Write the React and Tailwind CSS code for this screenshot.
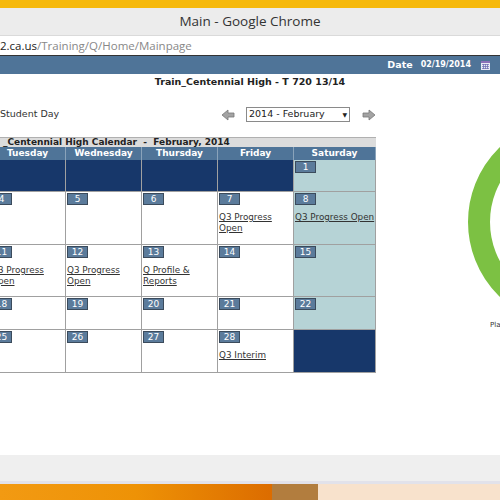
import React from 'react';

const navy = 'bg-[#17376a]';
const sat = 'bg-[#b6d3d6]';

const Badge = ({ n }) => (
  <span className="flex items-center justify-center w-[21px] h-[12px] bg-[#5b7b9b] border border-[#3b4b5c] text-white text-[9px] leading-none">
    {n}
  </span>
);

const Cell = ({ n, events = [], kind = 'day' }) => {
  const bg = kind === 'navy' ? navy : kind === 'sat' ? sat : 'bg-white';
  return (
    <div className={`${bg} border-r border-b border-[#a0a0a0] pl-[1px] pt-[1px] overflow-hidden leading-none`}>
      {n && <Badge n={n} />}
      {events.length > 0 && (
        <div className="mt-[7px] flex flex-col">
          {events.map((e, i) => (
            <span key={i} className="text-[8.8px] leading-[11px] text-[#333] underline">
              {e}
            </span>
          ))}
        </div>
      )}
    </div>
  );
};

const Arrow = ({ dir }) => (
  <svg width="14" height="12" viewBox="0 0 14 12">
    <polygon
      points={dir === 'left' ? '1,6 7,1 7,4 13,4 13,8 7,8 7,11' : '13,6 7,1 7,4 1,4 1,8 7,8 7,11'}
      fill="#a3a3a3"
      stroke="#777"
      strokeWidth="0.8"
    />
  </svg>
);

const rows = [
  { h: 'h-[32px]', cells: [{ kind: 'navy' }, { kind: 'navy' }, { kind: 'navy' }, { kind: 'navy' }, { kind: 'sat', n: '1' }] },
  {
    h: 'h-[53px]',
    cells: [
      { n: '4' },
      { n: '5' },
      { n: '6' },
      { n: '7', events: ['Q3 Progress', 'Open'] },
      { n: '8', kind: 'sat', events: ['Q3 Progress Open'] },
    ],
  },
  {
    h: 'h-[52px]',
    cells: [
      { n: '11', events: ['Q3 Progress', 'Open'] },
      { n: '12', events: ['Q3 Progress', 'Open'] },
      { n: '13', events: ['Q Profile &', 'Reports'] },
      { n: '14' },
      { n: '15', kind: 'sat' },
    ],
  },
  { h: 'h-[33px]', cells: [{ n: '18' }, { n: '19' }, { n: '20' }, { n: '21' }, { n: '22', kind: 'sat' }] },
  {
    h: 'h-[43px]',
    cells: [{ n: '25' }, { n: '26' }, { n: '27' }, { n: '28', events: ['Q3 Interim'] }, { kind: 'navy' }],
  },
];

const days = ['Tuesday', 'Wednesday', 'Thursday', 'Friday', 'Saturday'];

export default function App() {
  return (
    <div className="w-[500px] h-[500px] overflow-hidden flex flex-col bg-white font-['DejaVu_Sans',sans-serif]">
      <div className="h-[8px] bg-[#f6b90c]" />
      <div className="h-[27px] bg-[#ececec] flex items-center justify-center font-['Open_Sans',sans-serif] text-[13.5px] text-[#333]">
        Main - Google Chrome
      </div>
      <div className="h-[20px] bg-white flex items-center font-['Open_Sans',sans-serif] text-[11.5px] text-[#888] border-t border-[#dadada]">
        <span className="text-[#222]">2.ca.us</span>/Training/Q/Home/Mainpage
      </div>
      <div className="h-[1px] bg-[#333]" />
      <div className="h-[18px] bg-[#4f7498] flex items-center justify-end pr-[10px] text-white font-bold">
        <span className="text-[9.5px]">Date</span>
        <span className="text-[8px] ml-[8px]">02/19/2014</span>
        <svg width="9" height="9" viewBox="0 0 9 9" className="ml-[10px]">
          <rect x="0" y="0" width="9" height="9" fill="#e8e8f4" />
          <rect x="0" y="0" width="9" height="2" fill="#8a6fb8" />
          <path d="M1 3.5h7M1 5.5h7M1 7.5h7M2.5 3v5M4.5 3v5M6.5 3v5" stroke="#6a6ab0" strokeWidth="0.7" />
        </svg>
      </div>
      <div className="h-[16px] flex items-center justify-center text-[9.5px] font-bold text-[#222]">
        Train_Centennial High - T 720 13/14
      </div>

      <div className="h-[365px] flex">
        <div className="w-[420px] shrink-0 pt-[17px]">
          <div className="h-[15px] flex items-center">
            <span className="w-[221px] text-[9.5px] text-[#333]">Student Day</span>
            <Arrow dir="left" />
            <div className="ml-[11px] w-[104px] h-[15px] border border-[#8a8a8a] flex items-center justify-between px-[2px] text-[9.5px] text-[#222]">
              <span>2014 - February</span>
              <span className="text-[6px]">▼</span>
            </div>
            <div className="ml-[12px]">
              <Arrow dir="right" />
            </div>
          </div>

          <div className="mt-[15px] -ml-[10px] w-[386px]">
            <div className="h-[10px] bg-[#dcdcdc] border-t border-[#b0b0b0] flex items-center pl-[13px] text-[9px] font-bold text-[#222] whitespace-pre">
              _Centennial High Calendar  -  February, 2014
            </div>
            <div className="grid grid-cols-[76px_76px_76px_76px_82px] h-[13px] bg-[#4f7498]">
              {days.map((d) => (
                <div key={d} className="flex items-center justify-center text-[9px] font-bold text-white border-r border-[#8aa3ba]">
                  {d}
                </div>
              ))}
            </div>
            {rows.map((r, i) => (
              <div key={i} className={`grid grid-cols-[76px_76px_76px_76px_82px] ${r.h}`}>
                {r.cells.map((c, j) => (
                  <Cell key={j} {...c} />
                ))}
              </div>
            ))}
          </div>
        </div>

        <div className="w-[80px] shrink-0">
          <svg width="80" height="260" viewBox="0 0 80 260" className="overflow-visible">
            <circle cx="152" cy="132" r="93" fill="none" stroke="#7cc143" strokeWidth="22" />
            <text x="70" y="237" fontSize="7" fill="#333" fontFamily="DejaVu Sans, sans-serif">
              Planned
            </text>
          </svg>
        </div>
      </div>

      <div className="h-[26px] bg-[#efefef]" />
      <div className="h-[3px] bg-[#e2e2ea]" />
      <div className="h-[16px] flex">
        <div className="w-[272px] bg-gradient-to-r from-[#f29a12] via-[#ee9206] to-[#dc6c00]" />
        <div className="w-[46px] bg-[#b27d3e]" />
        <div className="flex-1 bg-[#f8e2cc]" />
      </div>
    </div>
  );
}
